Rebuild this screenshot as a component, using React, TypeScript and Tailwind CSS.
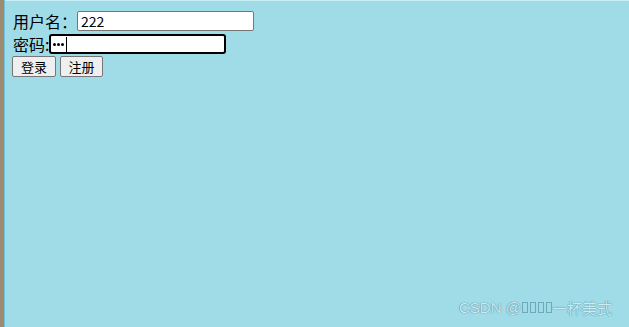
import React from "react";

export default function App() {
  const font = { fontFamily: '"Noto Sans CJK SC", "Liberation Sans", sans-serif' };
  return (
    <div className="w-[629px] h-[327px] flex overflow-hidden bg-[#a0dbe8]" style={font}>
      <div className="w-[4px] h-full bg-[#9c8b6e] shrink-0" />
      <div className="w-[1px] h-full bg-[#6fc0dc] shrink-0" />
      <div className="relative flex-1 flex flex-col">
        <div className="h-[1px] bg-[#c8eef6]" />
        <div className="flex flex-col pl-[8px] pt-[10px] text-[16px] text-black">
          <div className="flex items-center h-[20px]">
            <span className="leading-[20px]">用户名：</span>
            <div className="w-[177px] h-[20px] border border-[#767676] rounded-[2px] bg-white flex items-center px-[3px] text-[14px] leading-none">222</div>
          </div>
          <div className="flex items-center h-[20px] mt-[3px]">
            <span className="leading-[20px]">密码:</span>
            <div className="w-[177px] h-[20px] border-2 border-black rounded-[3px] bg-white flex items-center pl-[2px] leading-none">
              <span className="flex gap-[1px] items-center">
                <span className="w-[3px] h-[3px] rounded-full bg-black" />
                <span className="w-[3px] h-[3px] rounded-full bg-black" />
                <span className="w-[3px] h-[3px] rounded-full bg-black" />
              </span>
              <span className="w-[1px] h-[15px] bg-black ml-[2px]" />
            </div>
          </div>
          <div className="flex items-center gap-[4px] mt-[2px] -ml-[1px]">
            <button className="w-[44px] h-[21px] border border-[#767676] rounded-[2px] bg-[#efefef] text-[13px] leading-none flex items-center justify-center">登录</button>
            <button className="w-[43px] h-[21px] border border-[#767676] rounded-[2px] bg-[#efefef] text-[13px] leading-none flex items-center justify-center">注册</button>
          </div>
        </div>
        <div className="absolute left-[454px] top-[300px] flex items-center text-[15px] leading-none text-[#cdebf2] [text-shadow:0_0_1px_#4f8ea2,0_0_1px_#4f8ea2]">
          <span style={{ fontFamily: '"Liberation Sans", sans-serif' }}>CSDN @</span>
          <span className="flex gap-[2px] ml-[1px]">
            <span className="inline-block w-[6px] h-[11px] border border-[#6fa8b8]" />
            <span className="inline-block w-[6px] h-[11px] border border-[#6fa8b8]" />
            <span className="inline-block w-[6px] h-[11px] border border-[#6fa8b8]" />
            <span className="inline-block w-[6px] h-[11px] border border-[#6fa8b8]" />
          </span>
          <span>一杯美式</span>
        </div>
      </div>
    </div>
  );
}
